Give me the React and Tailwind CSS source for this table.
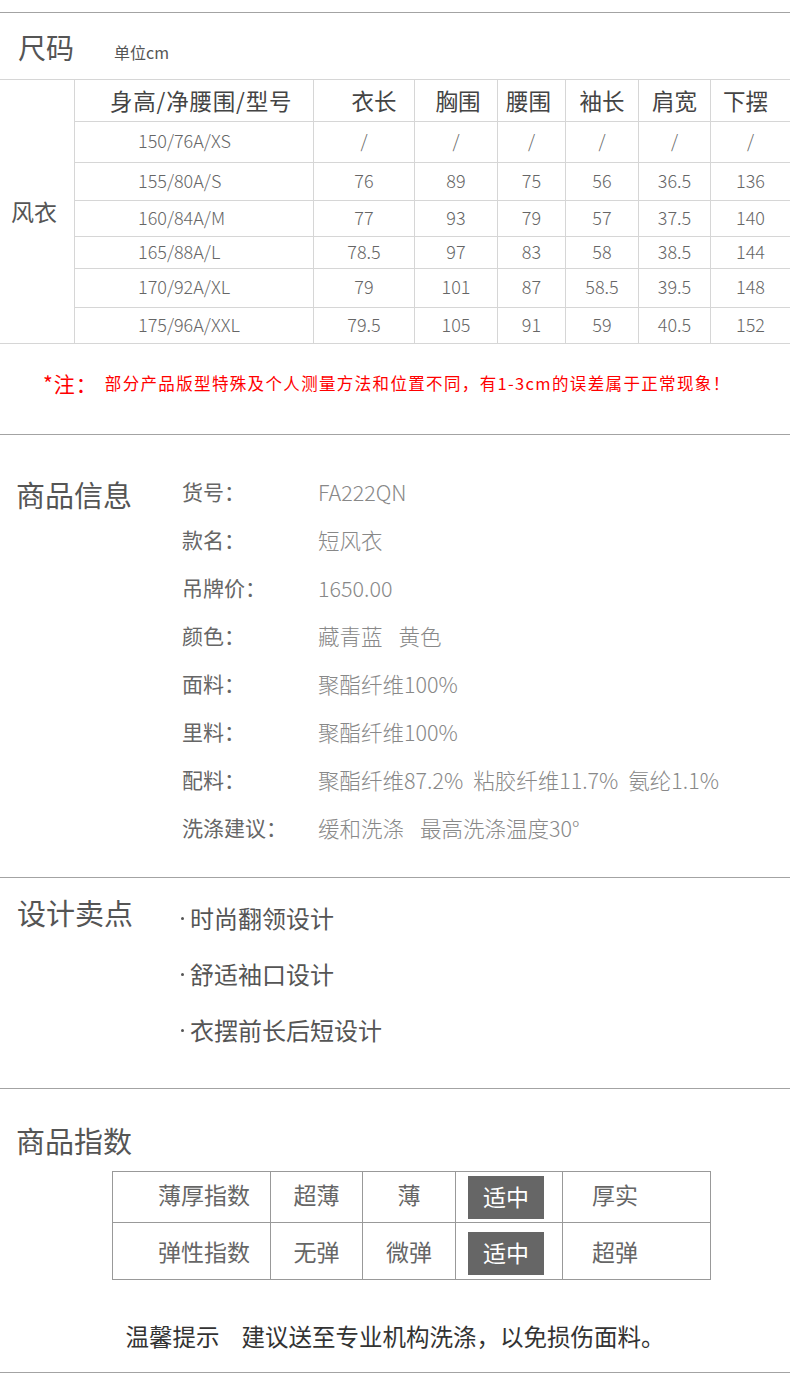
import React from "react";

const FONT = { fontFamily: '"Noto Sans CJK SC", "Noto Sans", sans-serif' };

const sizeRows = [
  { h: "h-[41px]", v: ["150/76A/XS", "/", "/", "/", "/", "/", "/"] },
  { h: "h-[38px]", v: ["155/80A/S", "76", "89", "75", "56", "36.5", "136"] },
  { h: "h-[36px]", v: ["160/84A/M", "77", "93", "79", "57", "37.5", "140"] },
  { h: "h-[32px]", v: ["165/88A/L", "78.5", "97", "83", "58", "38.5", "144"] },
  { h: "h-[39px]", v: ["170/92A/XL", "79", "101", "87", "58.5", "39.5", "148"] },
  { h: "h-[36px]", v: ["175/96A/XXL", "79.5", "105", "91", "59", "40.5", "152"] },
];

const headers = [
  ["衣长", "pl-[20px]"],
  ["胸围", "pl-[4px]"],
  ["腰围", "pr-[6px]"],
  ["袖长", ""],
  ["肩宽", ""],
  ["下摆", "pr-[10px]"],
];

const info = [
  ["货号：", ["FA222QN"], 0],
  ["款名：", ["短风衣"], 0],
  ["吊牌价：", ["1650.00"], 0],
  ["颜色：", ["藏青蓝", "黄色"], 16],
  ["面料：", ["聚酯纤维100%"], 0],
  ["里料：", ["聚酯纤维100%"], 0],
  ["配料：", ["聚酯纤维87.2%", "粘胶纤维11.7%", "氨纶1.1%"], 10],
  ["洗涤建议：", ["缓和洗涤", "最高洗涤温度30°"], 16],
];

const GRID = "grid grid-cols-[238px_101px_83px_68px_73px_72px_80px]";

function IndexRow({ label, a, b, last, second }) {
  const txt = second ? "" : "pb-[5px]";
  return (
    <div
      className={`grid grid-cols-[157px_92px_93px_107px_148px] text-[23px] text-[#666] ${
        second ? "h-[57px] border-t border-[#999]" : "h-[50px]"
      }`}
    >
      <div className={`flex items-center pl-[45px] ${txt}`}>{label}</div>
      <div className={`flex items-center justify-center border-l border-[#999] ${txt}`}>{a}</div>
      <div className={`flex items-center justify-center border-l border-[#999] ${txt}`}>{b}</div>
      <div
        className={`flex border-l border-[#999] pl-[12px] ${
          second ? "items-end pb-[4px]" : "items-center"
        }`}
      >
        <div className="w-[76px] h-[43px] bg-[#666] text-white flex items-center justify-center pb-[2px]">
          适中
        </div>
      </div>
      <div className={`flex items-center pl-[29px] border-l border-[#999] ${txt}`}>{last}</div>
    </div>
  );
}

export default function App() {
  return (
    <div className="w-[790px] h-[1392px] bg-white overflow-hidden" style={FONT}>
      <div className="h-[12px]" />
      <div className="h-px bg-[#a3a3a3]" />

      {/* 尺码 header */}
      <div className="h-[66px] flex items-baseline pl-[18px] pt-[14px]">
        <span className="text-[28px] leading-[40px] text-[#555]">尺码</span>
        <span className="ml-[40px] text-[16px] text-[#555]">单位cm</span>
      </div>

      {/* size table */}
      <div className="flex border-t border-b border-[#d6d6d6]">
        <div className="w-[75px] border-r border-[#d6d6d6] flex items-center pl-[11px] text-[23px] text-[#555]">
          风衣
        </div>
        <div className="flex-1 flex flex-col">
          <div className={`${GRID} h-[41px] text-[22.5px] text-[#444]`}>
            <div className="flex items-center pl-[35px] tracking-[0.8px]">身高/净腰围/型号</div>
            {headers.map(([h, p]) => (
              <div key={h} className={`flex items-center justify-center border-l border-[#d6d6d6] ${p}`}>
                {h}
              </div>
            ))}
          </div>
          {sizeRows.map((r, i) => (
            <div
              key={i}
              className={`${GRID} ${r.h} border-t border-[#d6d6d6] text-[18px] text-[#666] font-light`}
            >
              <div className="flex items-center pl-[63px] pb-[3px]">{r.v[0]}</div>
              {r.v.slice(1).map((c, j) => (
                <div
                  key={j}
                  className="flex items-center justify-center border-l border-[#d6d6d6] pb-[3px]"
                >
                  {c}
                </div>
              ))}
            </div>
          ))}
        </div>
      </div>

      {/* note */}
      <div className="h-[90px] pt-[28px] pl-[43px] flex items-start text-[#ff0000]">
        <span className="text-[21px] leading-[22px] tracking-[1px]">*注：</span>
        <span className="ml-[7px] text-[16.5px] leading-[22px] tracking-[1.35px]">
          部分产品版型特殊及个人测量方法和位置不同，有1-3cm的误差属于正常现象！
        </span>
      </div>
      <div className="h-px bg-[#a3a3a3]" />

      {/* 商品信息 */}
      <div className="h-[442px] pt-[33px] flex">
        <div className="w-[182px] pl-[16px]">
          <div className="h-[48px] flex items-center mt-[3px] text-[29px] text-[#555]">
            商品信息
          </div>
        </div>
        <div className="flex flex-col">
          {info.map(([k, vs, gap]) => (
            <div key={k} className="h-[48px] flex items-center">
              <div className="w-[136px] text-[21px] text-[#666]">{k}</div>
              <div className="flex text-[21.5px] text-[#888] font-light">
                {vs.map((v, i) => (
                  <span key={i} style={i > 0 ? { marginLeft: gap } : undefined}>
                    {v}
                  </span>
                ))}
              </div>
            </div>
          ))}
        </div>
      </div>
      <div className="h-px bg-[#a3a3a3]" />

      {/* 设计卖点 */}
      <div className="h-[210px] pt-[12px] flex">
        <div className="w-[180px] pl-[17px]">
          <div className="h-[56px] flex items-center -mt-[5px] text-[29px] text-[#555]">
            设计卖点
          </div>
        </div>
        <div className="flex flex-col text-[24px] text-[#555]">
          {["时尚翻领设计", "舒适袖口设计", "衣摆前长后短设计"].map((t) => (
            <div key={t} className="h-[56px] flex items-center">
              <span className="w-[3px] h-[3px] rounded-full bg-[#555] ml-[1px] mr-[6px] mt-[1px]" />
              <span>{t}</span>
            </div>
          ))}
        </div>
      </div>
      <div className="h-px bg-[#a3a3a3]" />

      {/* 商品指数 */}
      <div className="h-[283px] pt-[32px]">
        <div className="h-[40px] flex items-center pl-[16px] text-[29px] text-[#555]">
          商品指数
        </div>
        <div className="mt-[10px] ml-[112px] w-[599px] border border-[#999]">
          <IndexRow label="薄厚指数" a="超薄" b="薄" last="厚实" />
          <IndexRow label="弹性指数" a="无弹" b="微弹" last="超弹" second />
        </div>
        <div className="mt-[42px] h-[30px] flex items-center justify-center text-[23.5px] text-[#333]">
          <span>温馨提示</span>
          <span className="ml-[22px]">建议送至专业机构洗涤，以免损伤面料。</span>
        </div>
      </div>
      <div className="h-px bg-[#a3a3a3]" />
    </div>
  );
}
